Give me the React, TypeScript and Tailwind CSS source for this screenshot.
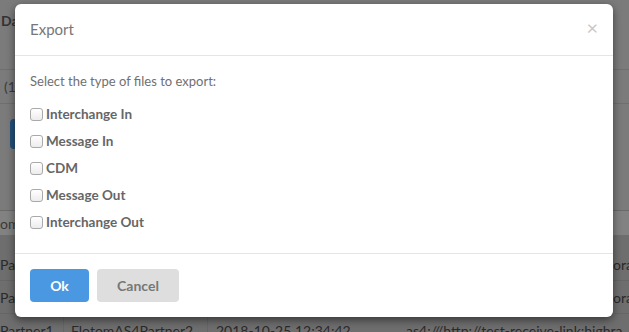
import React from "react";

const items = ["Interchange In", "Message In", "CDM", "Message Out", "Interchange Out"];

function Box() {
  return (
    <span className="inline-block w-[13px] h-[13px] rounded-[3px] border border-[#a9a9a9] bg-gradient-to-b from-[#ffffff] to-[#ececec] shrink-0" />
  );
}

export default function App() {
  return (
    <div
      className="relative w-[629px] h-[332px] overflow-hidden bg-[#7b7b7b] text-[#2e2e2e]"
      style={{ fontFamily: "Lato, 'Open Sans', sans-serif" }}
    >
      {/* dimmed background page */}
      <div className="flex flex-col h-full">
        <div className="h-[70px] border-b border-[#6f6f6f] px-[1px] pt-[10px] text-[14px] font-bold text-[#333]">Da</div>
        <div className="h-[34px] border-b border-[#6f6f6f] flex items-center px-[4px] text-[14px] text-[#3a3a3a]">(1</div>
        <div className="h-[107px] border-b border-[#6a6a6a] pt-[15px] pl-[10px]">
          <div className="w-[40px] h-[30px] rounded-[4px] bg-[#24507a]" />
        </div>
        <div className="h-[24px] bg-[#828282] flex items-center text-[14px] text-[#3a3a3a]">om</div>
        <div className="flex-1 bg-[#6e6e6e] text-[14px] text-[#2a2a2a] pt-[13px] overflow-hidden">
          <div className="h-[33px] border-b border-[#666] flex items-center justify-between">
            <span>Par</span>
            <span className="-mr-[4px]">ora</span>
          </div>
          <div className="h-[33px] border-b border-[#666] flex items-center justify-between">
            <span>Par</span>
            <span className="-mr-[4px]">ora</span>
          </div>
          <div className="h-[33px] flex items-center text-[14px]">
            <span className="w-[64px] border-r border-[#666] h-full flex items-center whitespace-nowrap">Partner1</span>
            <span className="w-[144px] pl-[7px] border-r border-[#666] h-full flex items-center whitespace-nowrap">FlotomAS4Partner2</span>
            <span className="w-[198px] pl-[8px] h-full flex items-center whitespace-nowrap">2018-10-25 12:34:42</span>
            <span className="whitespace-nowrap">as4:///http://test-receive-link:highra</span>
          </div>
        </div>
      </div>

      {/* modal */}
      <div className="absolute left-[15px] top-[4px] w-[598px] bg-white rounded-[6px] shadow-[0_3px_9px_rgba(0,0,0,0.5)] text-[#666]">
        <div className="h-[52px] border-b border-[#e5e5e5] flex items-center justify-between px-[15px]">
          <span className="text-[15px] text-[#777]">Export</span>
          <span className="text-[20px] leading-none text-[#c8c8c8] -mt-[5px]">×</span>
        </div>
        <div className="px-[15px] pt-[15px] pb-[17px]">
          <div className="text-[13px] text-[#707070] h-[22px] flex items-center">Select the type of files to export:</div>
          <div className="mt-[8px] flex flex-col">
            {items.map((t) => (
              <label key={t} className="h-[27px] flex items-center gap-[3px] text-[13.5px] font-bold text-[#666]">
                <Box />
                <span>{t}</span>
              </label>
            ))}
          </div>
        </div>
        <div className="border-t border-[#e5e5e5] px-[15px] pt-[15px] pb-[15px] flex gap-[8px]">
          <button className="w-[59px] h-[33px] rounded-[4px] bg-[#4a98e1] text-white text-[14px] font-bold">Ok</button>
          <button className="w-[82px] h-[33px] rounded-[4px] bg-[#dedede] text-[#777] text-[14px] font-bold">Cancel</button>
        </div>
      </div>
    </div>
  );
}
